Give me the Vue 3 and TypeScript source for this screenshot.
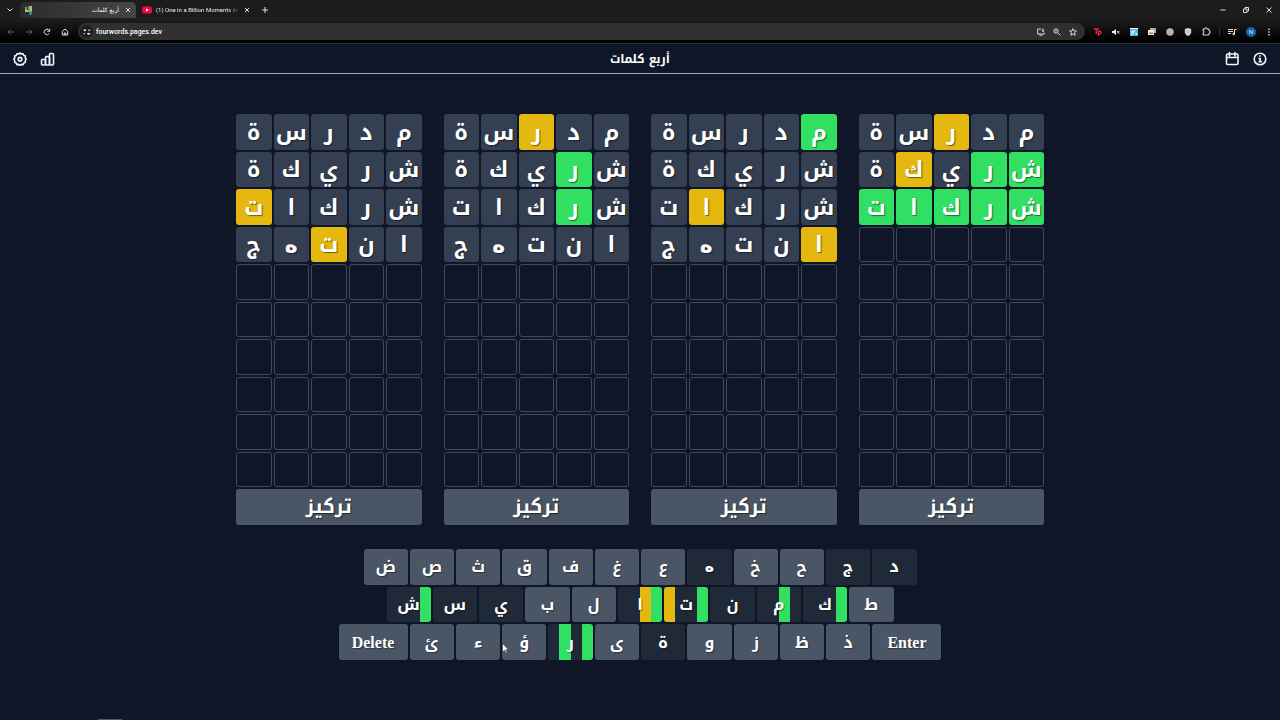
<script setup lang="ts">
import { ref } from 'vue'

type Mark = 'g' | 'y' | '-'
interface Cell { letter: string; mark: Mark | 'e' }

const guesses: string[] = ['مدرسة', 'شريكة', 'شركات', 'انتهج']
const results: string[][] = [
  ['-----', '-----', '----y', '--y--'],
  ['--y--', '-g---', '-g---', '-----'],
  ['g----', '-----', '---y-', 'y----'],
  ['--y--', 'gg-y-', 'ggggg'],
]
const ROWS = 10

const boards: Cell[][] = results.map((marks) =>
  Array.from({ length: ROWS * 5 }, (_, i): Cell => {
    const row = Math.floor(i / 5)
    const col = i % 5
    return row < marks.length
      ? { letter: guesses[row][col], mark: marks[row][col] as Mark }
      : { letter: '', mark: 'e' }
  }),
)

const keyRows: string[][] = [
  ['ض', 'ص', 'ث', 'ق', 'ف', 'غ', 'ع', 'ه', 'خ', 'ح', 'ج', 'د'],
  ['ش', 'س', 'ي', 'ب', 'ل', 'ا', 'ت', 'ن', 'م', 'ك', 'ط'],
  ['Delete', 'ئ', 'ء', 'ؤ', 'ر', 'ى', 'ة', 'و', 'ز', 'ظ', 'ذ', 'Enter'],
]
const used = 'هجدشسياتنمكرة'
const keyMarks: Record<string, string> = {
  ش: '---g', ا: '--yg', ت: 'y--g', م: '--g-', ك: '---g', ر: '-g-g',
}
const quarters = (key: string): string[] => (keyMarks[key] ?? '').split('')
const isWide = (key: string): boolean => key.length > 1
const isHeh = (letter: string): boolean => letter === 'ه'

const address = ref('fourwords.pages.dev')
</script>

<template>
  <div class="window">
    <div class="tabs">
      <button class="plain tab-search" aria-label="Search tabs">
        <svg width="8" height="8" viewBox="0 0 8 8"><path d="M1.5 2.5 4 5l2.500-2.500" class="line" /></svg>
      </button>
      <div class="tab active">
        <svg width="9" height="9" viewBox="0 0 9 9">
          <path d="M1 1h2v3H1z" fill="#3fb884" /><path d="M1 4h4v2H1z" fill="#e0b820" />
          <path d="M4 0h2v5H4z" fill="#3e9de0" /><path d="M6 0h2v6H6z" fill="#e0b820" />
          <path d="M5 5h3v1.500H5z" fill="#3fb884" /><path d="M5.500 6.500h2V9h-2z" fill="#3e9de0" />
        </svg>
        <span class="tab-name" dir="rtl">أربع كلمات</span>
        <button class="plain" aria-label="Close tab">
          <svg width="6" height="6" viewBox="0 0 6 6"><path d="m1 1 4 4m0-4L1 5" class="line" /></svg>
        </button>
      </div>
      <div class="tab">
        <svg width="10" height="8" viewBox="0 0 10 8"><rect width="10" height="7" y=".5" rx="2" fill="#f5063c" /><path d="m4 2.500 3 1.500-3 1.500z" fill="#fff" /></svg>
        <span class="tab-name faded">(1) One in a Billion Moments in</span>
        <button class="plain" aria-label="Close tab">
          <svg width="6" height="6" viewBox="0 0 6 6"><path d="m1 1 4 4m0-4L1 5" class="line" /></svg>
        </button>
      </div>
      <button class="plain" aria-label="New tab">
        <svg width="8" height="8" viewBox="0 0 8 8"><path d="M4 1v6M1 4h6" class="line" /></svg>
      </button>
      <div class="win-controls">
        <button class="plain" aria-label="Minimize"><svg width="8" height="8" viewBox="0 0 8 8"><path d="M1.500 4h5" class="line" /></svg></button>
        <button class="plain" aria-label="Restore"><svg width="8" height="8" viewBox="0 0 8 8"><path d="M1.500 3h3.500v3.500H1.500zM3 3V1.500h3.500V5H5" class="line" /></svg></button>
        <button class="plain" aria-label="Close"><svg width="8" height="8" viewBox="0 0 8 8"><path d="m1.500 1.500 5 5m0-5-5 5" class="line" /></svg></button>
      </div>
    </div>

    <div class="toolbar">
      <div class="nav">
        <button class="plain dim" aria-label="Back"><svg width="8" height="8" viewBox="0 0 8 8"><path d="M7 4H1m2.500-2.500L1 4l2.500 2.500" class="line" /></svg></button>
        <button class="plain dim" aria-label="Forward"><svg width="8" height="8" viewBox="0 0 8 8"><path d="M1 4h6M4.500 1.500 7 4 4.500 6.500" class="line" /></svg></button>
        <button class="plain" aria-label="Reload"><svg width="8" height="8" viewBox="0 0 8 8"><path d="M6.300 5.300A2.700 2.700 0 1 1 6 2.200M6.700.8v2.500H4.300" class="line" /></svg></button>
        <button class="plain" aria-label="Home"><svg width="8" height="8" viewBox="0 0 8 8"><path d="M1.300 3.300 4 1l2.700 2.300V7H1.300zM3.200 7V5h1.600v2" class="line" /></svg></button>
      </div>
      <div class="address">
        <button class="plain site" aria-label="Site information"><svg width="8" height="8" viewBox="0 0 8 8"><path d="M.5 2.200h2.500M5 2.200h2.500M.5 5.800h1.500M4 5.800h3.500" class="line" /><circle cx="2" cy="2.200" r="1" fill="#ddd" /><circle cx="5.500" cy="5.800" r="1" fill="#ddd" /></svg></button>
        <input v-model="address" aria-label="Address" spellcheck="false" />
        <div class="address-tools">
          <button class="plain" aria-label="Install"><svg width="8" height="8" viewBox="0 0 8 8"><path d="M4 1H.7v5h6.600V4.500M2.500 7.200h3M6 .5v3M4.700 2.300 6 3.500l1.300-1.200" class="line" /></svg></button>
          <button class="plain" aria-label="Zoom"><svg width="8" height="8" viewBox="0 0 8 8"><circle cx="3" cy="3" r="2.200" class="line" /><path d="m4.800 4.800 2.500 2.500M2 3h2" class="line" /></svg></button>
          <button class="plain" aria-label="Bookmark"><svg width="8" height="8" viewBox="0 0 8 8"><path d="m4 .7 1 2.200 2.400.2-1.800 1.600.5 2.500L4 5.900 1.900 7.200l.5-2.500L.6 3.100 3 2.900z" class="line" /></svg></button>
        </div>
      </div>
      <div class="extensions">
        <button class="plain" aria-label="Extension Tp"><svg width="8" height="8" viewBox="0 0 8 8"><path d="M0 1h5M2.300 1v5M4.300 3v5M4.300 3.200h1.400a1.300 1.300 0 0 1 0 2.800H4.300" fill="none" stroke="#e8213f" stroke-width="1.400" /></svg></button>
        <button class="plain" aria-label="Mute"><svg width="8" height="8" viewBox="0 0 8 8"><path d="M0 3h1.500L4 1v6L1.500 5H0z" fill="#eee" /><path d="m5 3 2.500 2.500m0-2.500L5 5.500" class="line" /></svg></button>
        <button class="plain" aria-label="Reader"><svg width="8" height="8" viewBox="0 0 8 8"><path d="M0 0h8v8H0z" fill="#48b5e8" /><path d="M0 0h8v1H0zM1.500 2.500h4v1h-3v1h2v1h-2v2h-1zM5.500 5h1.500v1.500H5.500z" fill="#fff" /></svg></button>
        <button class="plain" aria-label="Pictures"><svg width="8" height="8" viewBox="0 0 8 8"><path d="M2 0h6v5H2z" fill="#aaa" /><path d="M0 2h6v5H0z" fill="#f1e9df" /><path d="m1 6 1.500-2L4 5.500 5 4v2z" fill="#765" /></svg></button>
        <button class="plain" aria-label="Cookies"><svg width="8" height="8" viewBox="0 0 8 8"><circle cx="4" cy="4" r="3.700" fill="#c9b7b0" /><path d="M2 3h1.500M4.500 3H6M2.500 5.500h3" stroke="#a99" /></svg></button>
        <button class="plain" aria-label="Shield"><svg width="8" height="8" viewBox="0 0 8 8"><path d="m4 0 3.200 1v3.500Q6.800 6.800 4 8 1.200 6.800.8 4.500V1z" fill="#cfd2d6" /><path d="M4 2v3" stroke="#aaa" /></svg></button>
        <button class="plain" aria-label="Extensions"><svg width="9" height="9" viewBox="0 0 9 9"><path d="M1 2h2V1h2v1h2v2h1v2H7v2H1V6.200h.8V4H1z" class="line" /></svg></button>
        <span class="divider"></span>
        <button class="plain" aria-label="Media"><svg width="9" height="8" viewBox="0 0 9 8"><path d="M0 1.500h5M0 3.500h5M0 5.500h3M6.500 6V1.500h2" class="line" /><circle cx="5.700" cy="6" r="1.200" fill="#ddd" /></svg></button>
        <button class="plain profile" aria-label="Profile">N</button>
        <button class="plain" aria-label="Menu"><svg width="8" height="8" viewBox="0 0 8 8"><path d="M3.300.5h1.400v1.400H3.300zm0 2.800h1.400v1.400H3.300zm0 2.800h1.400v1.400H3.300z" fill="#ddd" /></svg></button>
      </div>
    </div>

    <header class="game-header">
      <div class="icons">
        <button class="plain" aria-label="Settings">
          <svg width="16" height="16" viewBox="0 0 16 16" class="icon"><path d="M6.600 3 8 2l1.400 1 1.700-.2.700 1.600 1.600.7-.2 1.700 1 1.400-1 1.400.2 1.700-1.600.7-.7 1.600-1.700-.2L8 14.200l-1.400-.8-1.700.2-.7-1.600-1.600-.7.200-1.700-1-1.400 1-1.400-.2-1.700 1.600-.7.700-1.600z" /><circle cx="8" cy="8.200" r="1.800" /></svg>
        </button>
        <button class="plain" aria-label="Statistics">
          <svg width="16" height="16" viewBox="0 0 16 16" class="icon"><rect x="1.500" y="8.500" width="4" height="5.500" rx="1" /><rect x="5.500" y="5.500" width="4" height="8.500" rx="1" /><rect x="9.500" y="2.500" width="4" height="11.500" rx="1" /></svg>
        </button>
      </div>
      <h1 class="arabic" dir="rtl">أربع كلمات</h1>
      <div class="icons">
        <button class="plain" aria-label="Calendar">
          <svg width="16" height="16" viewBox="0 0 16 16" class="icon"><rect x="2.500" y="3" width="11.500" height="10.500" rx="1.300" /><path d="M5.500 1.500V5M11 1.500V5M2.500 6.500H14" /></svg>
        </button>
        <button class="plain" aria-label="Information">
          <svg width="16" height="16" viewBox="0 0 16 16" class="icon"><circle cx="8" cy="8" r="5.800" /><path d="M7 7.500h1.200v3.300M7 10.800h2.500M8 4.800v.5" /></svg>
        </button>
      </div>
    </header>

    <main>
      <div class="boards">
        <section v-for="(cells, b) in boards" :key="b" class="board">
          <div class="grid arabic" dir="rtl">
            <div v-for="(cell, i) in cells" :key="i" class="cell" :class="['mark-' + cell.mark, { heh: isHeh(cell.letter) }]">{{ cell.letter }}</div>
          </div>
          <button class="focus arabic">تركيز</button>
        </section>
      </div>

      <div class="keyboard">
        <div v-for="(row, r) in keyRows" :key="r" class="key-row" :class="'row-' + r">
          <button v-for="key in row" :key="key" class="key arabic" :class="{ used: used.includes(key), wide: isWide(key), heh: isHeh(key) }">
            <span class="quarters" aria-hidden="true">
              <i v-for="(q, n) in quarters(key)" :key="n" :class="'q-' + q"></i>
            </span>
            <span class="label">{{ key }}</span>
          </button>
        </div>
        <svg class="pointer" width="7" height="11" viewBox="0 0 7 11"><path d="M.5.500v8.500l2-1.800 1.400 3 1.300-.6-1.400-2.900h2.700z" fill="#fff" stroke="#222" stroke-width=".5" /></svg>
      </div>
    </main>
    <footer class="taskbar"><span></span></footer>
  </div>
</template>

<style>
body {
  background: #0f1628;
}
</style>

<style scoped>
.window {
  min-height: 100vh;
  display: flex;
  flex-direction: column;
  background: #0f1628;
  color: #fff;
  font-family: "Noto Sans", sans-serif;
}
.window * {
  box-sizing: border-box;
}
.arabic {
  font-family: "Noto Kufi Arabic", "Noto Sans Arabic", "DejaVu Sans", sans-serif;
}
/* Heh is drawn as a plain ring */
.cell.heh,
.key.heh {
  font-family: "DejaVu Sans", sans-serif;
}
.plain {
  display: flex;
  align-items: center;
  justify-content: center;
  padding: 0;
  border: 0;
  background: none;
  color: inherit;
}
.line {
  fill: none;
  stroke: #ddd;
  stroke-width: 1;
}
.dim {
  opacity: 0.4;
}
.tabs {
  display: flex;
  align-items: center;
  height: 20px;
  padding: 0 6px;
  background: #1c1c1c;
}
.tab-search {
  width: 8px;
  margin-right: 6px;
}
.tab {
  display: flex;
  align-items: center;
  gap: 4px;
  width: 120px;
  height: 14px;
  padding: 0 6px;
  font-size: 6px;
  line-height: 12px;
}
.tab.active {
  width: 116px;
  height: 16px;
  gap: 6px;
  padding: 0 5px 0 4px;
  border-radius: 5px 5px 0 0;
  background: linear-gradient(90deg, #2a2d2a, #454545);
  font-family: "DejaVu Sans", sans-serif;
}
.tab-name {
  flex: 1;
  overflow: hidden;
  white-space: nowrap;
}
.tab-name.faded {
  color: #eee;
  font-family: Roboto, sans-serif;
  -webkit-mask-image: linear-gradient(90deg, #000 85%, transparent);
  mask-image: linear-gradient(90deg, #000 85%, transparent);
}
.tabs > .tab + .tab + .plain {
  margin-left: 5px;
}
.win-controls {
  display: flex;
  gap: 15px;
  margin-left: auto;
  padding-right: 1px;
}
.toolbar {
  display: flex;
  align-items: center;
  height: 23px;
  padding: 0 7px;
  background: linear-gradient(#1c1c1c, #030303 80%);
}
.nav {
  display: flex;
  gap: 10px;
  padding-right: 9px;
}
.address {
  flex: 1;
  display: flex;
  align-items: center;
  height: 17px;
  padding: 0 8px 0 2px;
  border-radius: 9px;
  background: #303030;
}
.site {
  width: 13px;
  height: 13px;
  border-radius: 50%;
  background: #1d1d1d;
}
.address input {
  flex: 1;
  min-width: 0;
  padding: 0 0 0 3px;
  border: 0;
  outline: 0;
  background: none;
  color: #fff;
  font: 500 7px/12px Roboto, sans-serif;
}
.address-tools {
  display: flex;
  gap: 8px;
}
.extensions {
  display: flex;
  align-items: center;
  gap: 10px;
  padding-left: 9px;
}
.divider {
  width: 1px;
  height: 8px;
  margin: 0 -2px;
  background: #333;
}
.profile {
  width: 10px;
  height: 10px;
  margin: 0 -1px;
  border-radius: 50%;
  background: #1267b0;
  font-size: 6px;
  line-height: 10px;
}
.game-header {
  display: grid;
  grid-template-columns: 1fr auto 1fr;
  align-items: center;
  height: 31px;
  padding: 0 12px;
  border-top: 1px solid #2c303b;
  border-bottom: 1px solid #a3aabd;
}
.game-header h1 {
  margin: 0;
  font-size: 12px;
  line-height: 24px;
}
.icons {
  display: flex;
  gap: 12px;
}
.icons:last-child {
  justify-content: flex-end;
}
.icon {
  fill: none;
  stroke: #f1f5f9;
  stroke-width: 1.6;
  stroke-linejoin: round;
  stroke-linecap: round;
}
main {
  flex: 1;
  padding: 40px 16px 0;
}
.boards {
  display: grid;
  grid-template-columns: repeat(4, 1fr);
  gap: 22px;
  max-width: 808px;
  margin: 0 auto;
}
.board {
  display: grid;
  gap: 2px;
}
.grid {
  display: grid;
  grid-template-columns: repeat(5, 1fr);
  gap: 2px;
  font-size: 22px;
  font-weight: 700;
  line-height: 32px;
  text-shadow: 1px 1px 1px rgba(0, 0, 0, 0.5);
}
.cell {
  display: flex;
  justify-content: center;
  align-items: center;
  aspect-ratio: 1;
  min-width: 0;
  min-height: 0;
  padding-top: 2px;
  border-radius: 3px;
  background: #344052;
}
.cell.mark-y {
  background: #e4b80f;
}
.cell.mark-g {
  background: #31df63;
}
.cell.mark-e {
  border: 1px solid #3f4959;
  background: none;
}
.focus {
  height: 36px;
  padding: 0;
  border: 0;
  border-radius: 3px;
  background: #4a5565;
  color: #fff;
  font-size: 19px;
  font-weight: 700;
  line-height: 32px;
  text-shadow: 1px 1px 1px rgba(0, 0, 0, 0.5);
}
.keyboard {
  position: relative;
  display: grid;
  grid-template-rows: repeat(3, 1fr);
  justify-items: center;
  gap: 2px;
  max-width: 603px;
  height: 111px;
  margin: 24px auto 0;
}
.key-row {
  display: grid;
  gap: 2px;
  width: 100%;
  grid-template-columns: repeat(12, 1fr);
}
.row-0 {
  max-width: 553px;
}
.row-1 {
  max-width: 507px;
  grid-template-columns: repeat(11, 1fr);
}
.row-2 {
  grid-template-columns: 69px repeat(10, 1fr) 69px;
}
.key {
  display: grid;
  min-width: 0;
  padding: 0;
  overflow: hidden;
  border: 0;
  border-radius: 3px;
  background: #4a5565;
  color: #fff;
  font-size: 16px;
  font-weight: 700;
  line-height: 24px;
  text-shadow: 1px 1px 1px rgba(0, 0, 0, 0.4);
}
.key.used {
  background: #1f2937;
}
.key.wide {
  font-family: "Liberation Serif", serif;
}
.quarters,
.label {
  grid-area: 1 / 1;
}
.quarters {
  display: grid;
  grid-template-columns: repeat(4, 1fr);
  height: 100%;
}
.q-g {
  background: #31df63;
}
.q-y {
  background: #e4b80f;
}
.label {
  align-self: center;
  padding-top: 1px;
  z-index: 1;
}
.pointer {
  position: absolute;
  left: 163px;
  top: 94px;
}
.taskbar {
  height: 3px;
  padding: 2px 98px 0;
  background: #111a24;
}
.taskbar span {
  display: block;
  width: 24px;
  height: 1px;
  background: #55585c;
}
</style>
